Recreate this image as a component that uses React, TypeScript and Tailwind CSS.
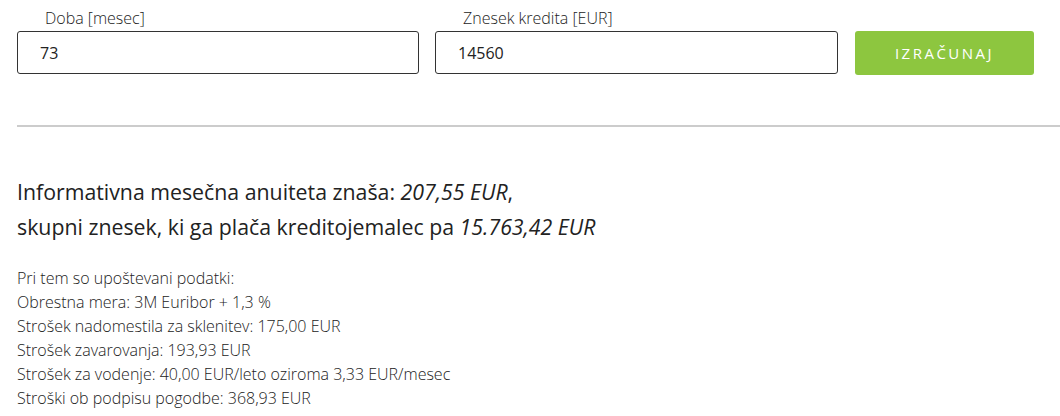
import React from "react";

export default function App() {
  const font = { fontFamily: '"Open Sans", "Noto Sans", sans-serif' };
  return (
    <div className="w-[1060px] h-[416px] bg-white text-[#222] overflow-hidden" style={font}>
      <div className="pl-[17px] pt-[7px] flex items-end gap-[16px]">
        <div className="flex flex-col w-[402px]">
          <label className="pl-[28px] text-[16px] font-light leading-[22px] text-[#222] mb-[2px]">Doba [mesec]</label>
          <input
            defaultValue="73"
            className="h-[43px] w-full rounded-[3px] border border-[#333] px-[22px] text-[16px] text-[#222] outline-none"
            style={font}
          />
        </div>
        <div className="flex flex-col w-[403px]">
          <label className="pl-[28px] text-[16px] font-light leading-[22px] text-[#222] mb-[2px]">Znesek kredita [EUR]</label>
          <input
            defaultValue="14560"
            className="h-[43px] w-full rounded-[3px] border border-[#333] px-[22px] text-[16px] text-[#222] outline-none"
            style={font}
          />
        </div>
        <button
          className="ml-[1px] w-[179px] h-[44px] mb-[-1px] rounded-[3px] bg-[#8dc63f] text-white text-[15px] tracking-[2.5px] uppercase"
          style={font}
        >
          IZRAČUNAJ
        </button>
      </div>
      <div className="ml-[17px] mt-[51px] h-[2px] bg-[#cccccc]" />
      <div className="pl-[17px] pt-[47px] text-[21.3px] leading-[35px] text-[#222]">
        <p>
          Informativna mesečna anuiteta znaša: <em>207,55 EUR</em>,
        </p>
        <p>
          skupni znesek, ki ga plača kreditojemalec pa <em>15.763,42 EUR</em>
        </p>
      </div>
      <div className="pl-[17px] pt-[22px] text-[16px] font-light leading-[24px] text-[#222]">
        <p>Pri tem so upoštevani podatki:</p>
        <p>Obrestna mera: 3M Euribor + 1,3 %</p>
        <p>Strošek nadomestila za sklenitev: 175,00 EUR</p>
        <p>Strošek zavarovanja: 193,93 EUR</p>
        <p>Strošek za vodenje: 40,00 EUR/leto oziroma 3,33 EUR/mesec</p>
        <p>Stroški ob podpisu pogodbe: 368,93 EUR</p>
      </div>
    </div>
  );
}
